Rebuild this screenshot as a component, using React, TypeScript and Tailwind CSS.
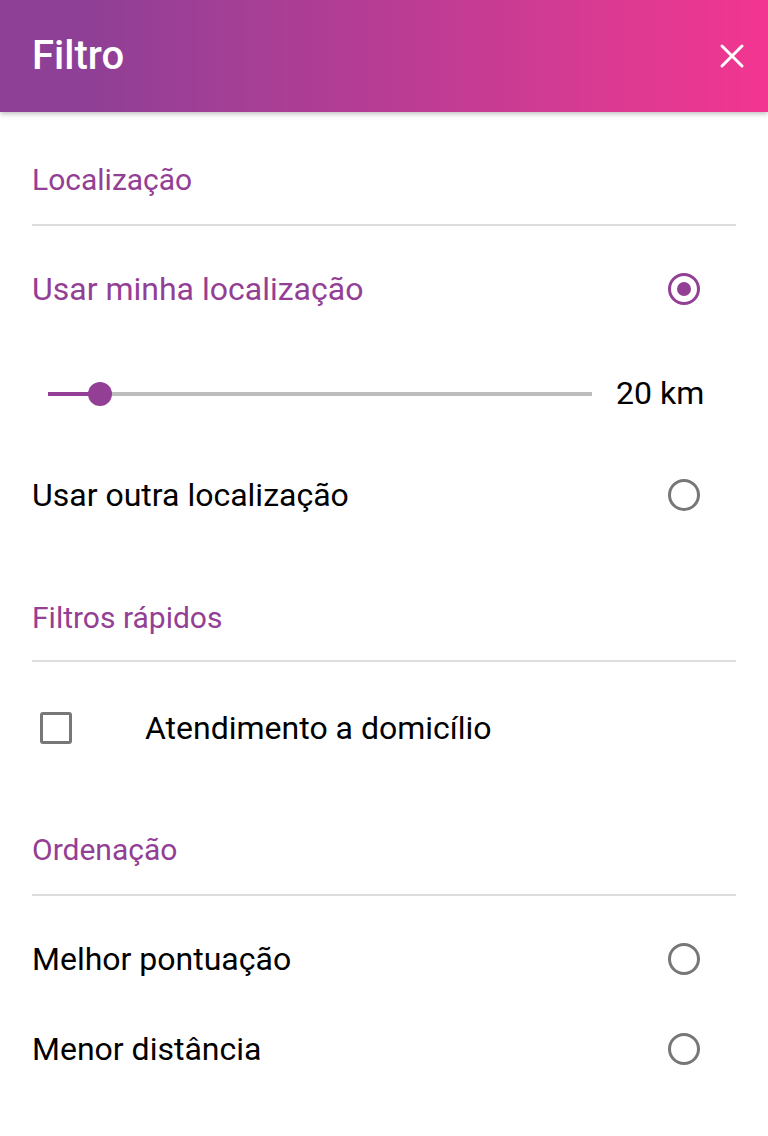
import React from "react";
import { X } from "lucide-react";

const font = { fontFamily: "Roboto, 'Noto Sans', sans-serif" };

const SectionTitle = ({ label, className }: { label: string; className: string }) => (
  <div className={`h-8 flex items-center text-[30px] text-[#933f95] ${className}`}>{label}</div>
);

const Divider = ({ className }: { className: string }) => <div className={`h-[2px] bg-[#dddddd] ${className}`} />;

const Radio = ({ checked }: { checked?: boolean }) => (
  <div
    className={`w-8 h-8 rounded-full border-[3px] flex items-center justify-center mr-9 ${
      checked ? "border-[#933f95]" : "border-[#777777]"
    }`}
  >
    {checked && <div className="w-[14px] h-[14px] rounded-full bg-[#933f95]" />}
  </div>
);

const Row = ({ label, checked, className, purple }: { label: string; checked?: boolean; className: string; purple?: boolean }) => (
  <div className={`h-16 flex items-center justify-between ${className}`}>
    <span className={`text-[32px] ${purple ? "text-[#933f95]" : "text-black"}`}>{label}</span>
    <Radio checked={checked} />
  </div>
);

export default function App() {
  return (
    <div className="w-[768px] h-[1136px] bg-white" style={font}>
      <header className="h-[112px] px-8 flex items-center justify-between bg-gradient-to-r from-[#8e3f96] from-[10%] via-[#b83c94] to-[#f33590] shadow-[0_2px_5px_rgba(0,0,0,0.25)] relative">
        <h1 className="text-white text-[40px] font-medium">Filtro</h1>
        <X className="text-white w-10 h-10 mr-[-16px]" strokeWidth={1.8} />
      </header>
      <div className="px-8">
        <SectionTitle label="Localização" className="mt-[51px]" />
        <Divider className="mt-[29px]" />
        <Row label="Usar minha localização" checked purple className="mt-[31px]" />
        <div className="h-16 mt-[41px] flex items-center">
          <div className="relative ml-4 w-[544px] h-1 bg-[#bdbdbd]">
            <div className="absolute left-0 top-0 h-1 w-[52px] bg-[#933f95]" />
            <div className="absolute left-[40px] top-[-10px] w-6 h-6 rounded-full bg-[#933f95]" />
          </div>
          <span className="ml-6 mt-[-3px] text-[32px] text-black">20 km</span>
        </div>
        <Row label="Usar outra localização" className="mt-[37px]" />
        <SectionTitle label="Filtros rápidos" className="mt-[74px]" />
        <Divider className="mt-[27px]" />
        <div className="h-16 mt-[34px] flex items-center">
          <div className="ml-2 w-8 h-8 border-[3px] border-[#777777] rounded-[3px]" />
          <span className="ml-[73px] text-[32px] text-black">Atendimento a domicílio</span>
        </div>
        <SectionTitle label="Ordenação" className="mt-[73px]" />
        <Divider className="mt-[29px]" />
        <Row label="Melhor pontuação" className="mt-[31px]" />
        <Row label="Menor distância" className="mt-[26px]" />
      </div>
    </div>
  );
}
